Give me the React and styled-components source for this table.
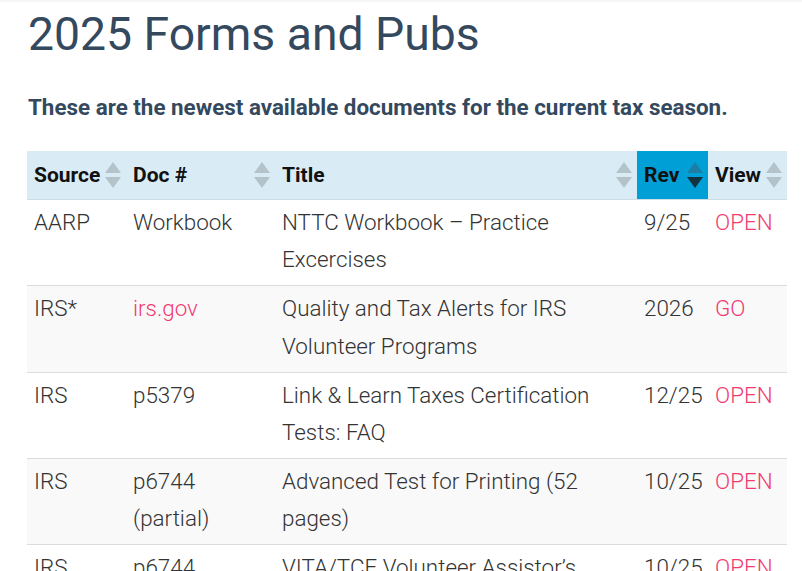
import React from "react";
import styled, { createGlobalStyle } from "styled-components";

const Global = createGlobalStyle`
  html, body { margin: 0; padding: 0; background: #fff; }
  body {
    font-family: Roboto, "Liberation Sans", sans-serif;
    overflow: hidden;
    height: 571px;
    border-top: 2px solid #f6f6f6;
  }
`;

const Page = styled.main`
  padding: 0 15px 0 27px;
`;

const Title = styled.h1`
  margin: 7px 0 0 1px;
  font-size: 46.3px;
  line-height: 1.1;
  font-weight: 400;
  color: #34495e;
`;

const Lead = styled.p`
  margin: 33px 0 0 1px;
  font-size: 22.4px;
  line-height: 28px;
  font-weight: 700;
  color: #34495e;
`;

const Table = styled.table`
  margin-top: 30px;
  width: 760px;
  table-layout: fixed;
  border-collapse: collapse;
`;

const Th = styled.th`
  height: 48px;
  padding: 0 5px 0 7px;
  text-align: left;
  font-size: 21px;
  font-weight: 700;
  color: #111;
  background: ${(p) => (p.$active ? "#009fd6" : "#d9ecf5")};
  border-bottom: 1px solid #cfdde4;
  vertical-align: middle;
`;

const HeadInner = styled.div`
  display: flex;
  align-items: center;
  justify-content: space-between;
  white-space: nowrap;
`;

const Row = styled.tr`
  background: ${(p) => (p.$alt ? "#f9f9f9" : "#fff")};
  border-top: 1px solid #dcdcdc;
`;

const Td = styled.td`
  padding: 4px 4px 6.5px 7px;
  font-size: 22.4px;
  line-height: 37.4px;
  font-weight: 300;
  color: #333;
  vertical-align: top;
  white-space: ${(p) => (p.$nowrap ? "nowrap" : "normal")};
`;

const Link = styled.a`
  color: #f23a6f;
  text-decoration: none;
`;

const SortIcon = ({ active }) => (
  <svg width="16" height="26" viewBox="0 0 16 26" style={{ flexShrink: 0 }}>
    <polygon points="0,11 8,0 16,11" fill={active ? "#1b7ea5" : "#b3c3c9"} />
    <polygon points="0,15 16,15 8,26" fill={active ? "#13313f" : "#b3c3c9"} />
  </svg>
);

const cols = [
  { key: "src", label: "Source", w: 99 },
  { key: "doc", label: "Doc #", w: 149 },
  { key: "title", label: "Title", w: 362 },
  { key: "rev", label: "Rev", w: 71, active: true },
  { key: "view", label: "View", w: 79 },
];

const rows = [
  { src: "AARP", doc: "Workbook", title: "NTTC Workbook – Practice Excercises", rev: "9/25", view: "OPEN" },
  { src: "IRS*", doc: "irs.gov", docLink: true, title: "Quality and Tax Alerts for IRS Volunteer Programs", rev: "2026", view: "GO" },
  { src: "IRS", doc: "p5379", title: "Link & Learn Taxes Certification Tests: FAQ", rev: "12/25", view: "OPEN" },
  { src: "IRS", doc: "p6744 (partial)", title: "Advanced Test for Printing (52 pages)", rev: "10/25", view: "OPEN" },
  { src: "IRS", doc: "p6744", title: "VITA/TCE Volunteer Assistor’s Reference Guide", rev: "10/25", view: "OPEN" },
];

export default function App() {
  return (
    <>
      <Global />
      <Page>
        <Title>2025 Forms and Pubs</Title>
        <Lead>These are the newest available documents for the current tax season.</Lead>
        <Table>
          <colgroup>
            {cols.map((c) => (
              <col key={c.key} style={{ width: c.w }} />
            ))}
          </colgroup>
          <thead>
            <tr>
              {cols.map((c) => (
                <Th key={c.key} $active={c.active}>
                  <HeadInner>
                    <span>{c.label}</span>
                    <SortIcon active={c.active} />
                  </HeadInner>
                </Th>
              ))}
            </tr>
          </thead>
          <tbody>
            {rows.map((r, i) => (
              <Row key={i} $alt={i % 2 === 1}>
                <Td>{r.src}</Td>
                <Td>{r.docLink ? <Link href="#">{r.doc}</Link> : r.doc}</Td>
                <Td>{r.title}</Td>
                <Td $nowrap>{r.rev}</Td>
                <Td $nowrap>
                  <Link href="#">{r.view}</Link>
                </Td>
              </Row>
            ))}
          </tbody>
        </Table>
      </Page>
    </>
  );
}
